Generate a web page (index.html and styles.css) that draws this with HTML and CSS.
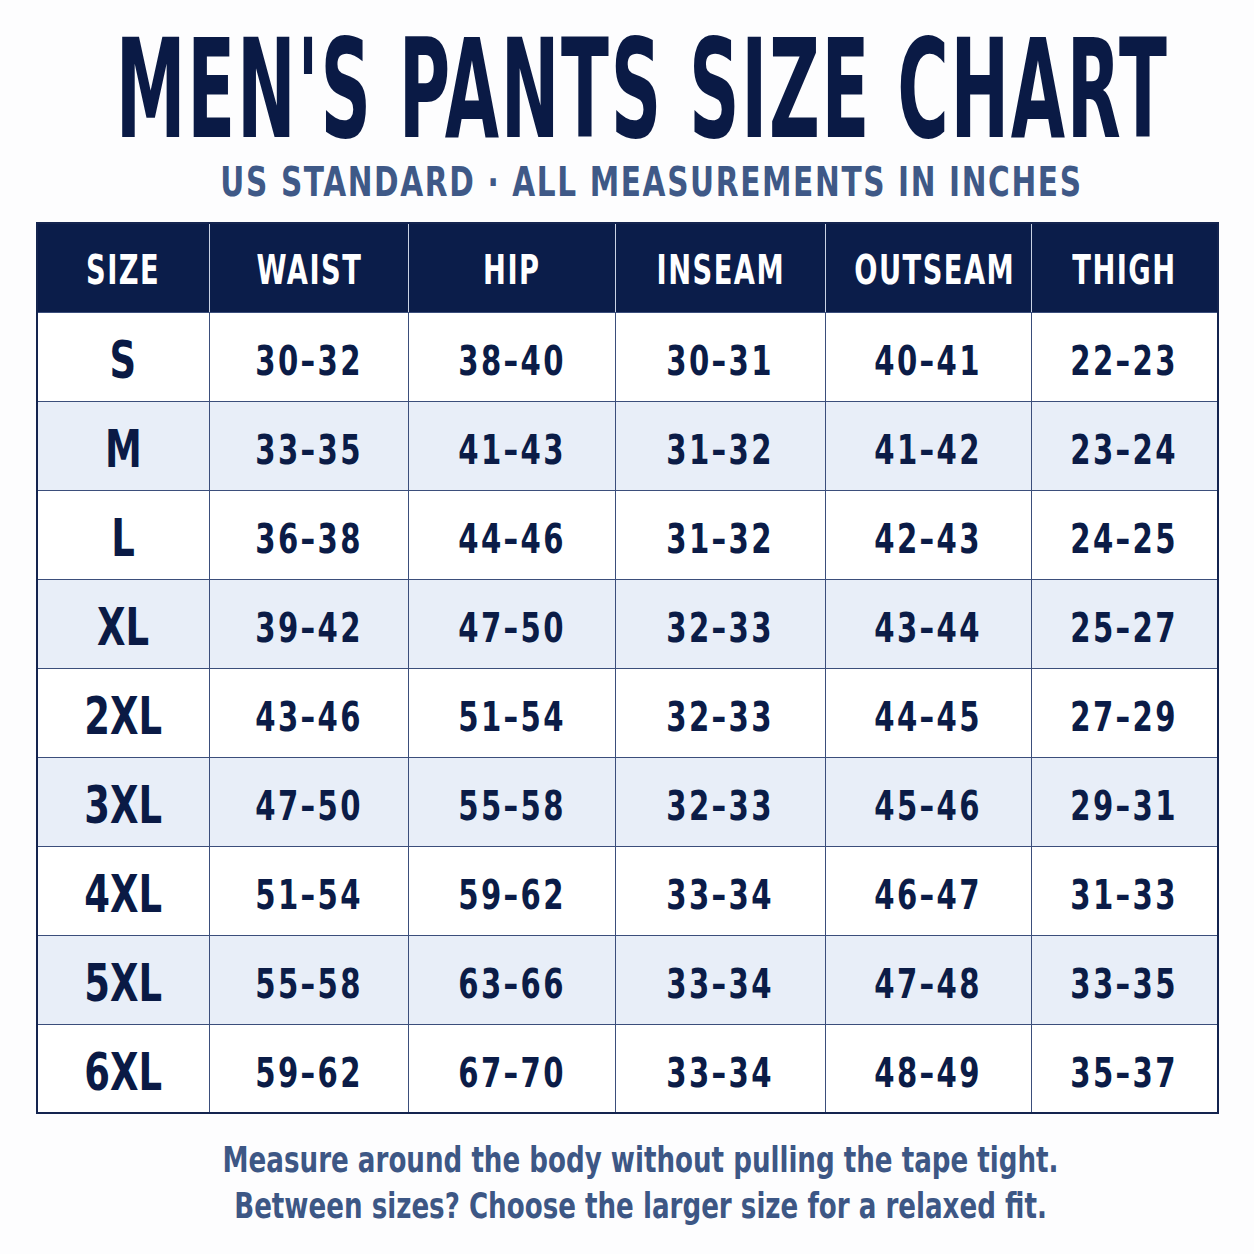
FILE: index.html
```html
<!DOCTYPE html>
<html lang="en">
<head>
<meta charset="utf-8">
<title>Men's Pants Size Chart</title>
<link rel="stylesheet" href="styles.css">
</head>
<body>
<main class="page">
  <h1 class="title"><span class="title-text">MEN'S PANTS SIZE CHART</span></h1>
  <p class="subtitle"><span class="subtitle-text">US STANDARD · ALL MEASUREMENTS IN INCHES</span></p>
  <table class="chart">
    <colgroup>
      <col class="c-size"><col class="c-waist"><col class="c-hip"><col class="c-inseam"><col class="c-outseam"><col class="c-thigh">
    </colgroup>
    <thead>
      <tr><th><span class="sx">SIZE</span></th><th><span class="sx">WAIST</span></th><th><span class="sx">HIP</span></th><th><span class="sx">INSEAM</span></th><th><span class="sx">OUTSEAM</span></th><th><span class="sx">THIGH</span></th></tr>
    </thead>
    <tbody>
      <tr><th><span class="sx">S</span></th><td><span class="sx">30–32</span></td><td><span class="sx">38–40</span></td><td><span class="sx">30–31</span></td><td><span class="sx">40–41</span></td><td><span class="sx">22–23</span></td></tr>
      <tr><th><span class="sx">M</span></th><td><span class="sx">33–35</span></td><td><span class="sx">41–43</span></td><td><span class="sx">31–32</span></td><td><span class="sx">41–42</span></td><td><span class="sx">23–24</span></td></tr>
      <tr><th><span class="sx">L</span></th><td><span class="sx">36–38</span></td><td><span class="sx">44–46</span></td><td><span class="sx">31–32</span></td><td><span class="sx">42–43</span></td><td><span class="sx">24–25</span></td></tr>
      <tr><th><span class="sx">XL</span></th><td><span class="sx">39–42</span></td><td><span class="sx">47–50</span></td><td><span class="sx">32–33</span></td><td><span class="sx">43–44</span></td><td><span class="sx">25–27</span></td></tr>
      <tr><th><span class="sx">2XL</span></th><td><span class="sx">43–46</span></td><td><span class="sx">51–54</span></td><td><span class="sx">32–33</span></td><td><span class="sx">44–45</span></td><td><span class="sx">27–29</span></td></tr>
      <tr><th><span class="sx">3XL</span></th><td><span class="sx">47–50</span></td><td><span class="sx">55–58</span></td><td><span class="sx">32–33</span></td><td><span class="sx">45–46</span></td><td><span class="sx">29–31</span></td></tr>
      <tr><th><span class="sx">4XL</span></th><td><span class="sx">51–54</span></td><td><span class="sx">59–62</span></td><td><span class="sx">33–34</span></td><td><span class="sx">46–47</span></td><td><span class="sx">31–33</span></td></tr>
      <tr><th><span class="sx">5XL</span></th><td><span class="sx">55–58</span></td><td><span class="sx">63–66</span></td><td><span class="sx">33–34</span></td><td><span class="sx">47–48</span></td><td><span class="sx">33–35</span></td></tr>
      <tr><th><span class="sx">6XL</span></th><td><span class="sx">59–62</span></td><td><span class="sx">67–70</span></td><td><span class="sx">33–34</span></td><td><span class="sx">48–49</span></td><td><span class="sx">35–37</span></td></tr>
    </tbody>
  </table>
  <p class="note"><span class="note-line">Measure around the body without pulling the tape tight.</span><span class="note-line">Between sizes? Choose the larger size for a relaxed fit.</span></p>
</main>
</body>
</html>
```
FILE: styles.css
```css
html, body {
  margin: 0;
  padding: 0;
  background: #fdfdfe;
  overflow: hidden;
}
body {
  font-family: "DejaVu Sans Condensed", "DejaVu Sans", sans-serif;
  font-weight: 700;
  color: #0b1c47;
}
.page {
  width: 1254px;
  height: 1254px;
  padding-top: 21px;
  box-sizing: border-box;
  display: flex;
  flex-direction: column;
  align-items: center;
}
.title {
  margin: 0;
  width: 100%;
  box-sizing: border-box;
  padding-left: 30px;
  display: flex;
  justify-content: center;
  font-size: 137px;
  line-height: 137px;
  font-weight: 700;
  color: #0a1a45;
}
.title-text {
  display: inline-block;
  white-space: nowrap;
  letter-spacing: 3px;
  transform: scaleX(0.569);
  transform-origin: center;
}
.subtitle {
  margin: 4px 0 0;
  width: 100%;
  box-sizing: border-box;
  padding-left: 50px;
  display: flex;
  justify-content: center;
  font-size: 40px;
  line-height: 40px;
  color: #3f5987;
}
.subtitle-text {
  display: inline-block;
  white-space: nowrap;
  letter-spacing: 2px;
  transform: scaleX(0.822);
  transform-origin: center;
}
.chart {
  margin-top: 20px;
  width: 1181px;
  table-layout: fixed;
  border-collapse: collapse;
  border: 2px solid #14244f;
  background: #ffffff;
}
.c-size { width: 173px; }
.c-waist { width: 199px; }
.c-hip { width: 207px; }
.c-inseam { width: 210px; }
.c-outseam { width: 206px; }
.c-thigh { width: 186px; }
.chart th, .chart td {
  border: 1.5px solid #3b4e7b;
  text-align: center;
  padding: 0;
  white-space: nowrap;
}
.sx {
  display: inline-block;
  transform-origin: center;
}
.chart thead th {
  height: 89px;
  padding-top: 5px;
  box-sizing: border-box;
  background: #0b1d4a;
  color: #ffffff;
  font-size: 41px;
  letter-spacing: 2px;
  border-color: #c9d2e3;
  border-top-color: #14244f;
  border-bottom-color: #3b4e7b;
}
.chart thead th .sx { transform: scaleX(0.74); }
.chart thead th:first-child { border-left-color: #14244f; }
.chart thead th:last-child { border-right-color: #14244f; }
.chart tbody tr { height: 89px; }
.chart tbody tr:nth-child(even) { background: #e8eef8; }
.chart tbody th {
  font-size: 52px;
  color: #0a1a45;
  padding-top: 7px;
}
.chart tbody th .sx { transform: scaleX(0.79); }
.chart tbody td {
  font-size: 41px;
  letter-spacing: 3px;
  color: #0b1c47;
  padding-top: 9px;
}
.chart tbody td .sx { transform: scaleX(0.79); }
.note {
  margin: 23px 0 0;
  width: 100%;
  box-sizing: border-box;
  padding-left: 28px;
  display: flex;
  flex-direction: column;
  align-items: center;
  font-size: 35px;
  line-height: 46px;
  color: #3d5785;
}
.note-line {
  display: inline-block;
  white-space: nowrap;
  transform: scaleX(0.83);
  transform-origin: center;
}
```
